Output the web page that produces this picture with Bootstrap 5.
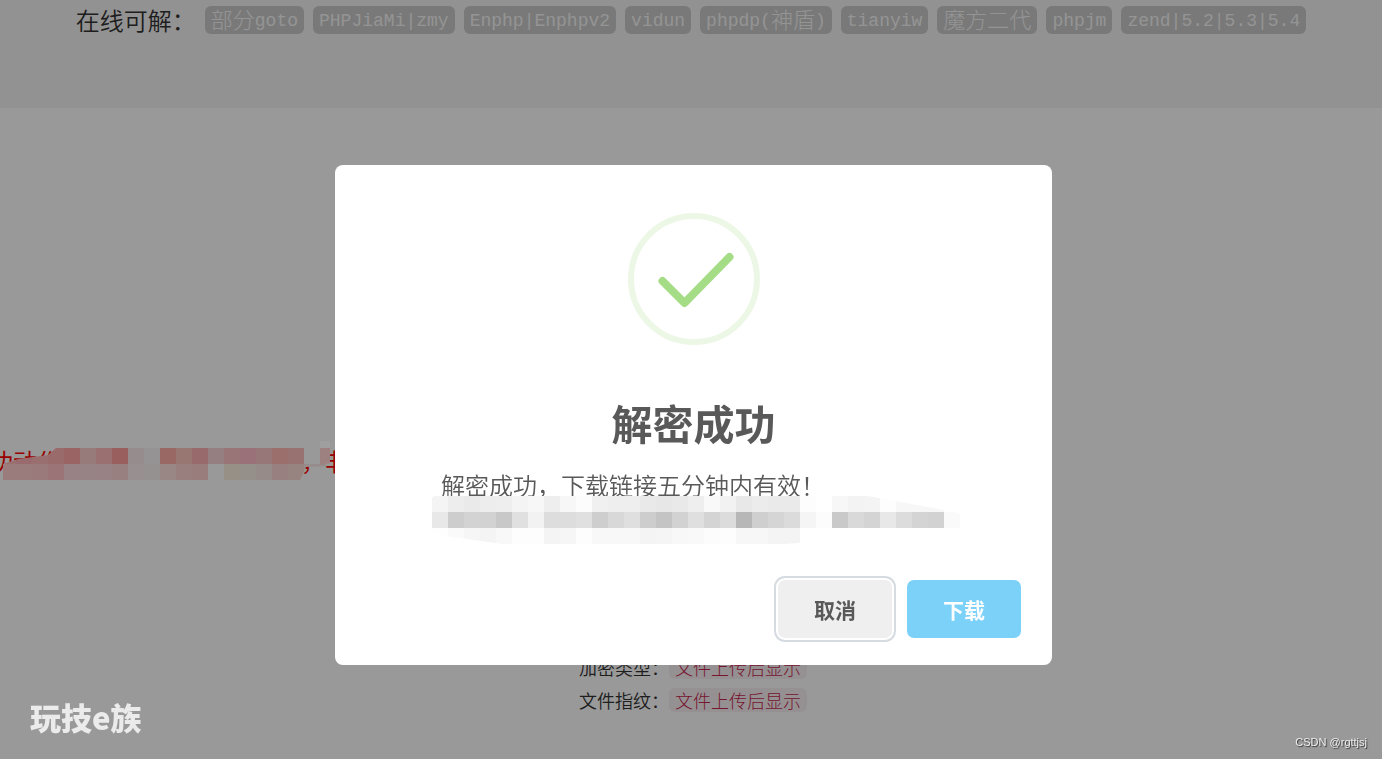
<!DOCTYPE html>
<html lang="zh-CN">
<head>
<meta charset="utf-8">
<meta name="viewport" content="width=device-width, initial-scale=1">
<title>解密成功</title>
<link href="https://cdn.jsdelivr.net/npm/bootstrap@5.3.0/dist/css/bootstrap.min.css" rel="stylesheet">
<style>
  body { font-family: "Open Sans", "Noto Sans CJK SC", sans-serif; color: #333; background: #fff; overflow: hidden; }
  .page { min-height: 100vh; }
  .solvable { background: #f4f4f4; padding: 6px 16px 74px; column-gap: 9px; }
  .solvable-label { font: 350 24px/28px "Noto Sans CJK SC", sans-serif; }
  .tag { background: #cacaca; color: #f7f7f7; border-radius: 6px; padding: 2px 6px 0; font: 18px/26px "Liberation Mono", "Noto Sans CJK SC", monospace; white-space: nowrap; }
  .tag-zh { font: 300 22px/20px "Noto Sans CJK SC", sans-serif; vertical-align: top; }
  .notice { margin: 340px 0 0 -11px; font: 24px/26px "Noto Sans CJK SC", sans-serif; color: #f00; white-space: nowrap; }
  .notice-gap { width: 240px; }
  .notice-mask { left: 11px; top: -7px; z-index: 1060; }
  .file-info { margin-top: 181px; row-gap: 9px; padding-left: 4px; }
  .file-info dt, .file-info dd { font: 350 18px/24px "Noto Sans CJK SC", sans-serif; margin: 0; }
  .file-info dd { font-weight: 300; color: #c7254e; background: #f9f2f4; border-radius: 6px; padding: 0 6px; }
  .modal-backdrop.dim { --bs-backdrop-opacity: .4; }
  .modal.result { z-index: 1070; padding-left: 5px; pointer-events: none; }
  .result .modal-dialog { max-width: 717px; margin-top: 165px; }
  .result .modal-content { border: 0; border-radius: 8px; padding: 48px 31px 27px; color: #595959; }
  .result h1 { font: 700 41px/60px "Noto Sans CJK SC", sans-serif; margin: 47px 0 20px; }
  .message { font: 350 24px/26px "Noto Sans CJK SC", sans-serif; margin: 0 75px 82px; }
  .message-mask { left: -9px; top: 24px; }
  .btn-result { width: 114px; height: 58px; border: 0; border-radius: 7px; font: 700 21px/30px "Noto Sans CJK SC", sans-serif; }
  .btn-cancel, .btn-cancel:hover { background: #efefef; color: #595959; box-shadow: 0 0 0 2px #fff, 0 0 0 4px #d5dbe1; }
  .btn-load, .btn-load:hover { background: #7cd1f9; color: #fff; }
  .actions { gap: 15px; }
  .brand { left: 30px; bottom: 24px; z-index: 1080; color: #ebebeb; font: 900 31px/36px "Noto Sans CJK SC", sans-serif; }
  .credit { right: 15px; bottom: 9px; z-index: 1080; color: #eee; font: 11px/16px "Liberation Sans", sans-serif; text-shadow: 1px 1px 1px #333; }
</style>
</head>
<body>
<div class="page">
  <header class="solvable d-flex flex-wrap justify-content-center">
    <span class="solvable-label">在线可解：</span>
    <span class="tag"><span class="tag-zh">部分</span>goto</span>
    <span class="tag">PHPJiaMi|zmy</span>
    <span class="tag">Enphp|Enphpv2</span>
    <span class="tag">vidun</span>
    <span class="tag">phpdp(<span class="tag-zh">神盾</span>)</span>
    <span class="tag">tianyiw</span>
    <span class="tag"><span class="tag-zh">魔方二代</span></span>
    <span class="tag">phpjm</span>
    <span class="tag">zend|5.2|5.3|5.4</span>
  </header>
  <main>
    <p class="notice d-flex position-relative">
      <span>功动作</span><span class="notice-gap"></span><span>，非</span>
      <svg class="notice-mask position-absolute" width="336" height="40" aria-hidden="true">
        <clipPath id="noticeShape"><path d="M3 23L18 18L48 14L56 7H304V23H326V25L306 26L300 39H3z"/></clipPath>
        <g id="noticeCells" clip-path="url(#noticeShape)"></g>
        <path fill="#9f9f9f" d="M320 0h10v7h-10z"/><path fill="#9d8080" d="M320 7h10v15l-10 2z"/>
      </svg>
    </p>
    <dl class="file-info d-flex flex-column align-items-center">
      <div class="d-flex"><dt>加密类型：</dt><dd>文件上传后显示</dd></div>
      <div class="d-flex"><dt>文件指纹：</dt><dd>文件上传后显示</dd></div>
    </dl>
  </main>
</div>

<div class="modal-backdrop dim show"></div>
<div class="modal result d-block" role="dialog" aria-modal="true" aria-labelledby="resultTitle">
  <div class="modal-dialog">
    <div class="modal-content">
      <svg class="mx-auto d-block" width="132" height="132" viewBox="0 0 132 132" aria-hidden="true">
        <circle cx="66" cy="66" r="63" fill="none" stroke="#edf7e6" stroke-width="6"/>
        <path d="M34.500 68L56.500 90L101.500 44" fill="none" stroke="#a5dc86" stroke-width="8" stroke-linecap="round" stroke-linejoin="round"/>
      </svg>
      <h1 id="resultTitle" class="text-center">解密成功</h1>
      <p class="message position-relative">解密成功，下载链接五分钟内有效！
        <svg class="message-mask position-absolute" width="528" height="48" aria-hidden="true">
          <clipPath id="messageShape"><path d="M2 0H436L528 17V32H368V47L352 48H70L14 40L0 34V2z"/></clipPath>
          <g id="messageCells" clip-path="url(#messageShape)"></g>
        </svg>
      </p>
      <div class="actions d-flex justify-content-end">
        <button type="button" class="btn btn-result btn-cancel">取消</button>
        <button type="button" class="btn btn-result btn-load">下载</button>
      </div>
    </div>
  </div>
</div>
<div class="brand position-fixed">玩技e族</div>
<div class="credit position-fixed">CSDN @rgttjsj</div>

<script src="https://cdn.jsdelivr.net/npm/bootstrap@5.3.0/dist/js/bootstrap.bundle.min.js"></script>
<script>
  // Fill a group with rows of 16px squares; "-" leaves a square empty.
  function mosaic(id, top, rows) {
    const group = document.getElementById(id);
    rows.forEach((row, y) => row.split(' ').forEach((c, x) => {
      if (c === '-') return;
      const r = document.createElementNS('http://www.w3.org/2000/svg', 'rect');
      const color = c.length === 2 ? c + c + c : c;
      for (const [k, v] of Object.entries({ x: x * 16, y: top + y * 16, width: 16, height: 16, fill: '#' + color })) r.setAttribute(k, v);
      group.appendChild(r);
    }));
  }
  mosaic('noticeCells', 7, [
    '9a7070 9a6b6e 9a6f70 9a6b6b 9a6464 977b7b 9a7070 985f5e 968c8d 959394 9a6864 987672 996a6c 967f81 997578 9a7079 977777 9a6f6c 987171',
    '9a7c7c 9a7c7c 9a7a7a 9a7476 988285 978385 988285 988080 989090 959190 988785 99807e 997c7c 999999 969086 96908a 968b88 998080 97837f 968c8b 968c8b'
  ]);
  mosaic('messageCells', 0, [
    'f4 ed ea ed ee f4 f7 ee f7 fc f0 ee ee e9 e7 e9 ee f9 f2 e8 ec ea ea fd ff f7 f3 f4 fd f7 f7 f7 ff',
    'e8 cd d3 d2 c8 e0 f2 dd dd e0 ce d8 df cd c4 d2 df d4 dc b7 cf d5 db f5 fc c9 d9 d4 e8 dc d4 d2 fa',
    'fe fa f6 f4 f8 fd fd f4 f6 fd f8 f8 f8 f4 f5 f8 f9 fc fd f7 f7 f4 f4 - - - - - - - - - -'
  ]);
</script>
</body>
</html>
